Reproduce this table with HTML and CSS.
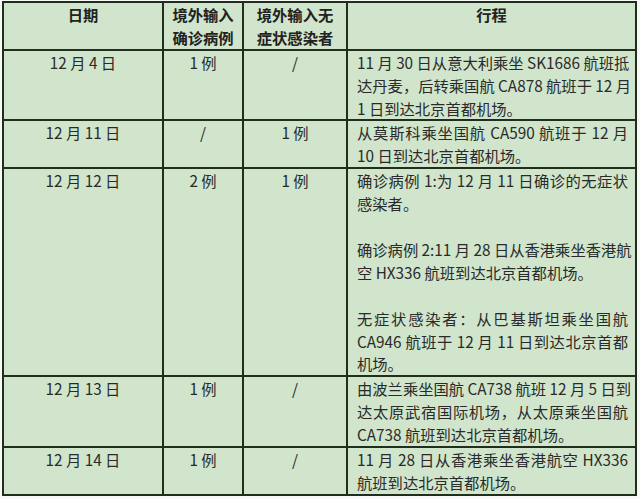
FILE: index.html
```html
<!DOCTYPE html>
<html lang="zh-CN">
<head>
<meta charset="utf-8">
<title>境外输入病例行程</title>
<link rel="stylesheet" href="styles.css">
</head>
<body>
<table class="sheet">
  <colgroup>
    <col class="c-date"><col class="c-conf"><col class="c-asym"><col class="c-trip">
  </colgroup>
  <thead>
    <tr>
      <th>日期</th>
      <th>境外输入<br>确诊病例</th>
      <th>境外输入无<br>症状感染者</th>
      <th>行程</th>
    </tr>
  </thead>
  <tbody>
    <tr>
      <td class="mid">12 月 4 日</td>
      <td class="mid">1 例</td>
      <td class="mid">/</td>
      <td class="trip">
        <span class="ln j">11 月 30 日从意大利乘坐 SK1686 航班抵</span>
        <span class="ln j">达丹麦，后转乘国航 CA878 航班于 12 月</span>
        <span class="ln">1 日到达北京首都机场。</span>
      </td>
    </tr>
    <tr>
      <td class="mid">12 月 11 日</td>
      <td class="mid">/</td>
      <td class="mid">1 例</td>
      <td class="trip">
        <span class="ln j">从莫斯科乘坐国航 CA590 航班于 12 月</span>
        <span class="ln">10 日到达北京首都机场。</span>
      </td>
    </tr>
    <tr>
      <td class="mid">12 月 12 日</td>
      <td class="mid">2 例</td>
      <td class="mid">1 例</td>
      <td class="trip">
        <span class="ln j">确诊病例 1:为 12 月 11 日确诊的无症状</span>
        <span class="ln">感染者。</span>
        <span class="ln blank"></span>
        <span class="ln j">确诊病例 2:11 月 28 日从香港乘坐香港航</span>
        <span class="ln">空 HX336 航班到达北京首都机场。</span>
        <span class="ln blank"></span>
        <span class="ln j">无症状感染者：从巴基斯坦乘坐国航</span>
        <span class="ln j">CA946 航班于 12 月 11 日到达北京首都</span>
        <span class="ln">机场。</span>
      </td>
    </tr>
    <tr>
      <td class="mid">12 月 13 日</td>
      <td class="mid">1 例</td>
      <td class="mid">/</td>
      <td class="trip">
        <span class="ln j">由波兰乘坐国航 CA738 航班 12 月 5 日到</span>
        <span class="ln j">达太原武宿国际机场，从太原乘坐国航</span>
        <span class="ln">CA738 航班到达北京首都机场。</span>
      </td>
    </tr>
    <tr>
      <td class="mid">12 月 14 日</td>
      <td class="mid">1 例</td>
      <td class="mid">/</td>
      <td class="trip">
        <span class="ln j">11 月 28 日从香港乘坐香港航空 HX336</span>
        <span class="ln">航班到达北京首都机场。</span>
      </td>
    </tr>
  </tbody>
</table>
</body>
</html>
```
FILE: styles.css
```css
html, body {
  margin: 0;
  padding: 0;
  background: #f7faf6;
}

body {
  padding: 1px 0 0 2px;
  font-family: "Noto Sans CJK SC", "Liberation Sans", sans-serif;
  font-size: 15.3px;
  line-height: 22.9px;
  color: #2a2a2a;
}

.sheet {
  border-collapse: separate;
  border-spacing: 0;
  table-layout: fixed;
  width: 635px;
  background: #d0e5cb;
  border-left: 2px solid #1f2e1d;
  border-top: 2px solid #1f2e1d;
}

.c-date { width: 160px; }
.c-conf { width: 80px; }
.c-asym { width: 104px; }
.c-trip { width: 289px; }

.sheet th,
.sheet td {
  border-right: 2px solid #1f2e1d;
  border-bottom: 2px solid #1f2e1d;
  vertical-align: top;
  padding: 0 7px 0 9px;
}

.sheet th {
  font-weight: 700;
  text-align: center;
  color: #222;
  padding: 0 4px;
}

.sheet td.mid {
  text-align: center;
  padding: 0 4px;
}

.ln {
  display: block;
  white-space: nowrap;
  height: 22.9px;
}

.ln.j {
  text-align: justify;
  text-align-last: justify;
  text-justify: inter-character;
}
```
